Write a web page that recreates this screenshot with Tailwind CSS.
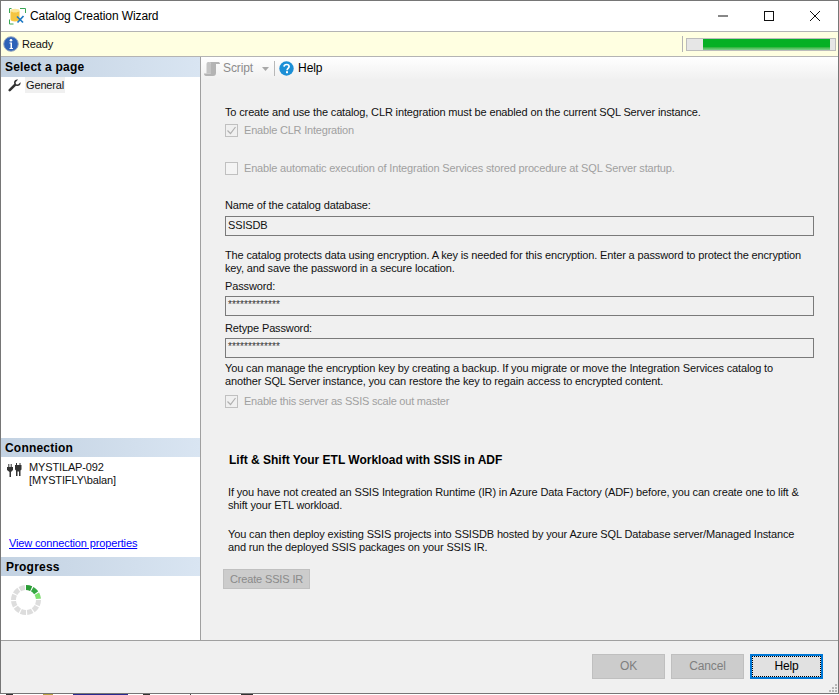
<!DOCTYPE html>
<html lang="en">
<head>
  <meta charset="UTF-8">
  <title>Catalog Creation Wizard</title>
  <script src="https://cdn.jsdelivr.net/npm/@tailwindcss/browser@4"></script>
</head>
<body class="bg-white overflow-hidden">
  <div class="w-[839px] h-[695px] flex flex-col font-['Liberation_Sans',Arial,sans-serif] text-[11px] leading-[13px] text-[#111] tracking-[-0.14px]">
    <div class="h-[694px] shrink-0 flex flex-col border border-[#767676] bg-[#f0f0f0]">

      <!-- title bar -->
      <div class="h-[30px] shrink-0 bg-white flex items-center pl-[8px]">
        <svg width="17" height="17" viewBox="0 0 17 17" class="mr-[4px]">
          <path d="M.5 11.500v4.500h4M11 .5h5.500v4.500M.5 5V.5h2" fill="none" stroke="#3aa655" stroke-width="1"/>
          <ellipse cx="6" cy="2.500" rx="4.500" ry="1.800" fill="#fbe79a"/>
          <path d="M1.500 2.500v9c0 1.200 2 2 4.500 2s4.500-.8 4.500-2v-9c0 1.200-2 1.800-4.500 1.800s-4.500-.6-4.500-1.800z" fill="#f4c542"/>
          <path d="M8 8.500l6 6M14.500 8l-6 6.500" stroke="#1f7ac4" stroke-width="1.700"/>
        </svg>
        <span class="text-[12px] tracking-[-0.1px] text-black">Catalog Creation Wizard</span>
        <div class="ml-auto flex items-center">
          <svg width="46" height="30" viewBox="0 0 46 30"><path d="M18 15h10" stroke="#111" stroke-width="1"/></svg>
          <svg width="46" height="30" viewBox="0 0 46 30"><rect x="18.500" y="10.500" width="9" height="9" fill="none" stroke="#111"/></svg>
          <svg width="46" height="30" viewBox="0 0 46 30"><path d="M18 10l10 10M28 10l-10 10" stroke="#111" stroke-width="1"/></svg>
        </div>
      </div>

      <!-- status banner -->
      <div class="h-[26px] shrink-0 bg-[#ffffe1] border-y border-[#b4b4b4] flex items-center pl-[2px]">
        <svg width="16" height="16" viewBox="0 0 16 16">
          <circle cx="8" cy="8" r="7.300" fill="#2d62b8" stroke="#9aa8bf"/>
          <circle cx="8" cy="4.300" r="1.300" fill="#fff"/>
          <path d="M6.500 6.500h2.500v5.500h1v1H6.500v-1h1V7.500h-1z" fill="#fff"/>
        </svg>
        <span class="ml-[3px]">Ready</span>
        <div class="ml-auto mr-[2px] flex items-center">
          <div class="w-px h-[16px] bg-[#b4b4b4] mr-[3px]"></div>
          <div class="w-[150px] h-[13px] border border-[#bcbcbc] bg-[#e6e6e6] pl-[16px] pr-[5px]">
            <div class="h-full bg-gradient-to-b from-[#06b025] from-70% to-[#7fd08c]"></div>
          </div>
        </div>
      </div>

      <div class="flex-1 flex min-h-0">
        <!-- left pane -->
        <div class="w-[200px] shrink-0 bg-white border-r border-[#a0a0a0] flex flex-col">
          <div class="h-[20px] shrink-0 flex items-center pl-[4px] pt-[1px] font-bold text-[12px] tracking-[0.2px] text-black bg-gradient-to-r from-[#c3d2e2] to-[#d9e5f2]">Select a page</div>
          <div class="h-[16px] flex items-center pl-[7px]">
            <svg width="13" height="13" viewBox="0 0 13 13">
              <path d="M12.500 3.200L10 5.600 8 5.200l-.4-2L10.100.6C8.300 0 6.100 1.200 6 3.400c0 .6.100 1 .3 1.400L.8 10.200c-.5.600-.5 1.300 0 1.800.5.500 1.300.5 1.800 0L8 6.700c2.500 1.100 5.200-.9 4.500-3.500z" fill="#333"/>
            </svg>
            <span class="ml-[4px] px-px bg-[#f0f0f0] h-[16px] leading-[16px]">General</span>
          </div>

          <div class="mt-[345px] h-[19px] shrink-0 flex items-center pl-[4px] pt-[1px] font-bold text-[12px] tracking-[0.2px] text-black bg-gradient-to-r from-[#c3d2e2] to-[#d9e5f2]">Connection</div>
          <div class="flex pl-[6px] pt-[4px] h-[78px]">
            <svg width="15" height="14" viewBox="0 0 15 14" class="mt-[2px]">
              <path d="M0 4h6v3L4 9v5H2.500V9L0 7zM1.300 1h1v3h-1zM3.700 1h1v3h-1z" fill="#333"/>
              <path d="M8 2h6.500v4.500l-1 1V13H12V8.500h-1.500V13H9V7.500l-1-1zM9 0h1v2H9zM12.500 0h1v2h-1z" fill="#333"/>
            </svg>
            <div class="ml-[7px]">MYSTILAP-092<br>[MYSTIFLY\balan]</div>
          </div>
          <a href="#" class="pl-[8px] h-[20px] leading-[16px] text-[#0000ff] underline">View connection properties</a>
          <div class="mt-[2px] h-[19px] shrink-0 flex items-center pl-[5px] pt-[1px] font-bold text-[12px] tracking-[0.2px] text-black bg-gradient-to-r from-[#c3d2e2] to-[#d9e5f2]">Progress</div>
          <div class="pl-[9px] pt-[8px]">
            <svg width="32" height="32" viewBox="0 0 32 32" fill="none" stroke-width="5">
              <circle cx="16" cy="16" r="12.500" pathLength="12" transform="rotate(-90 16 16)" stroke="#dddddd" stroke-dasharray=".82 .18"/>
              <circle cx="16" cy="16" r="12.500" pathLength="12" transform="rotate(-90 16 16)" stroke="#2a9d35" stroke-dasharray=".82 11.18"/>
              <circle cx="16" cy="16" r="12.500" pathLength="12" transform="rotate(-60 16 16)" stroke="#35a843" stroke-dasharray=".82 11.18"/>
              <circle cx="16" cy="16" r="12.500" pathLength="12" transform="rotate(-30 16 16)" stroke="#7ee36f" stroke-dasharray=".82 11.18"/>
            </svg>
          </div>
        </div>

        <!-- right pane -->
        <div class="flex-1 flex flex-col min-w-0">
          <div class="h-[23px] shrink-0 flex items-center pl-[3px] bg-gradient-to-b from-white to-[#f0f0f0]">
            <svg width="16" height="16" viewBox="0 0 16 16">
              <path d="M4 1h10c1 0 2 .6 2 2h-4v9c0 2-1 3-3 3H2c-1.300 0-2-1-2-2.500h6c.6 0 1-.4 1-1V3c0-1-.5-2-3-2z" fill="#b4b4b4"/>
              <path d="M4 1c1.500 0 3 .5 3 2v8.500c0 .6-.4 1-1 1H2.500V3c0-1 .5-2 1.500-2z" fill="#c4c4c4"/>
            </svg>
            <span class="ml-[3px] text-[#8c8c8c] text-[12px] tracking-[-0.1px]">Script</span>
            <svg width="7" height="4" viewBox="0 0 7 4" class="ml-[9px]"><path d="M0 0h7L3.500 4z" fill="#a8a8a8"/></svg>
            <div class="w-px h-[15px] bg-[#b8b8b8] ml-[5px]"></div>
            <svg width="15" height="15" viewBox="0 0 15 15" class="ml-[4px]">
              <circle cx="7.500" cy="7.500" r="7.200" fill="#1c8fd6"/>
              <path d="M5 5.600C5.200 4.200 6.300 3.500 7.600 3.500c1.500 0 2.500.9 2.500 2.100 0 1.900-2 1.800-2 3.600" fill="none" stroke="#fff" stroke-width="1.700"/>
              <rect x="7" y="10.200" width="2" height="2" fill="#fff"/>
            </svg>
            <span class="ml-[4px] text-[12px] tracking-[-0.1px] text-black">Help</span>
          </div>

          <div class="flex-1 pl-[24px] pr-[24px] flex flex-col items-start">
            <p class="mt-[26px]">To create and use the catalog, CLR integration must be enabled on the current SQL Server instance.</p>
            <label class="mt-[5px] flex items-center text-[#a0a0a0] tracking-[-0.2px]">
              <span class="w-[13px] h-[13px] border border-[#c0c0c0] bg-[#f0f0f0] flex items-center justify-center">
                <svg width="11" height="11" viewBox="0 0 11 11"><path d="M1.500 5.500l3 3 5-6.500" fill="none" stroke="#b0b0b0" stroke-width="1.200"/></svg>
              </span>
              <span class="ml-[6px]">Enable CLR Integration</span>
            </label>
            <label class="mt-[25px] flex items-center text-[#a0a0a0] tracking-[-0.17px]">
              <span class="w-[13px] h-[13px] border border-[#c0c0c0] bg-[#f4f4f4]"></span>
              <span class="ml-[6px]">Enable automatic execution of Integration Services stored procedure at SQL Server startup.</span>
            </label>
            <label class="mt-[24px]">Name of the catalog database:</label>
            <div class="mt-[4px] w-[589px] h-[20px] border border-[#7a7a7a] leading-[17px] pl-[2px] bg-[#f0f0f0]">SSISDB</div>
            <p class="mt-[13px] w-[589px]">The catalog protects data using encryption. A key is needed for this encryption. Enter a password to protect the encryption key, and save the password in a secure location.</p>
            <label class="mt-[5px]">Password:</label>
            <div class="mt-[3px] w-[589px] h-[20px] border border-[#7a7a7a] leading-[13px] pl-[2px] pt-[1px] text-[10px] text-[#333] tracking-[0.1px]">*************</div>
            <label class="mt-[6px]">Retype Password:</label>
            <div class="mt-[3px] w-[589px] h-[20px] border border-[#7a7a7a] leading-[13px] pl-[2px] pt-[1px] text-[10px] text-[#333] tracking-[0.1px]">*************</div>
            <p class="mt-[4px] w-[570px]">You can manage the encryption key by creating a backup. If you migrate or move the Integration Services catalog to another SQL Server instance, you can restore the key to regain access to encrypted content.</p>
            <label class="mt-[7px] flex items-center text-[#a0a0a0] tracking-[-0.22px]">
              <span class="w-[13px] h-[13px] border border-[#c0c0c0] bg-[#f0f0f0] flex items-center justify-center">
                <svg width="11" height="11" viewBox="0 0 11 11"><path d="M1.500 5.500l3 3 5-6.500" fill="none" stroke="#b0b0b0" stroke-width="1.200"/></svg>
              </span>
              <span class="ml-[6px]">Enable this server as SSIS scale out master</span>
            </label>
            <h2 class="mt-[46px] ml-[4px] font-bold text-[12px] text-black tracking-[0px]">Lift &amp; Shift Your ETL Workload with SSIS in ADF</h2>
            <p class="mt-[19px] ml-[3px] w-[580px]">If you have not created an SSIS Integration Runtime (IR) in Azure Data Factory (ADF) before, you can create one to lift &amp; shift your ETL workload.</p>
            <p class="mt-[16px] ml-[3px] w-[580px]">You can then deploy existing SSIS projects into SSISDB hosted by your Azure SQL Database server/Managed Instance and run the deployed SSIS packages on your SSIS IR.</p>
            <button class="mt-[15px] -ml-[2px] w-[87px] h-[20px] bg-[#cccccc] border border-[#c0c0c0] text-[#8a8a8a]">Create SSIS IR</button>
          </div>
        </div>
      </div>

      <!-- footer -->
      <div class="relative h-[53px] shrink-0 border-t border-[#a0a0a0] bg-[#f0f0f0] flex items-start justify-end pr-[15px] pt-[13px] gap-[6px]">
        <button class="w-[73px] h-[25px] bg-[#cccccc] border border-[#bfbfbf] text-[#7f7f7f] text-[12px]">OK</button>
        <button class="w-[73px] h-[25px] bg-[#cccccc] border border-[#bfbfbf] text-[#7f7f7f] text-[12px]">Cancel</button>
        <button class="w-[73px] h-[25px] bg-[#e1e1e1] border-2 border-[#0078d7] outline-1 outline-dotted outline-black -outline-offset-3 text-black text-[12px]">Help</button>
        <svg width="10" height="10" viewBox="0 0 10 10" class="absolute right-0 bottom-0" fill="#b8b8b8">
          <rect x="7" y="1" width="2" height="2"/><rect x="4" y="4" width="2" height="2"/><rect x="7" y="4" width="2" height="2"/>
          <rect x="1" y="7" width="2" height="2"/><rect x="4" y="7" width="2" height="2"/><rect x="7" y="7" width="2" height="2"/>
        </svg>
      </div>
    </div>

    <!-- sliver of the window behind -->
    <div class="h-px flex">
      <span class="ml-[6px] w-[7px] bg-[#333]"></span>
      <span class="ml-[30px] w-[10px] bg-[#b8a040]"></span>
      <span class="ml-[20px] w-[55px] bg-[#2a2a90]"></span>
      <span class="ml-[15px] w-[7px] bg-[#333]"></span>
      <span class="ml-[40px] w-px bg-[#444]"></span>
      <span class="ml-[50px] w-[12px] bg-[#333]"></span>
    </div>
  </div>
</body>
</html>
